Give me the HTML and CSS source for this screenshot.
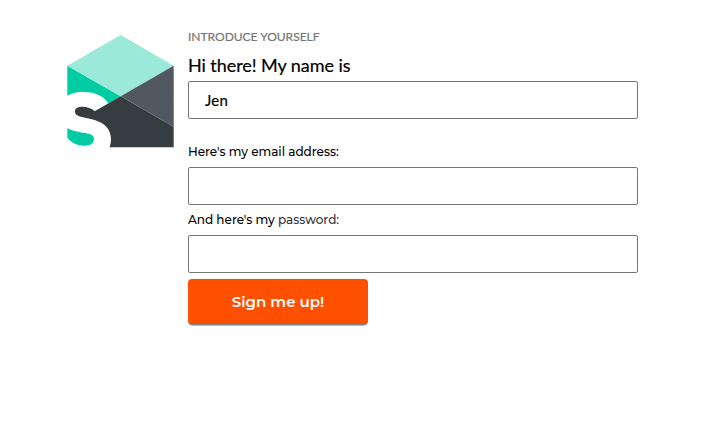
FILE: index.html
```html
<!DOCTYPE html>
<html lang="en">
<head>
<meta charset="utf-8">
<title>Sign up</title>
<link rel="stylesheet" href="styles.css">
</head>
<body>
<main class="signup">
  <svg class="logo" viewBox="21 20 321 339" aria-hidden="true">
    <path fill="#00cca3" d="M22 112 182 204 22 297Z"/>
    <path fill="#373c40" d="M182 204 341 295V357H22V297L40 215 92 225 104 249Z"/>
    <path fill="#9be9d9" d="M182 20 341 112 182 204 22 112Z"/>
    <path fill="#515860" d="M341 112V295L182 204Z"/>
    <path fill="#fff" d="M20 203C40 192 56 191 72 191C108 191 132 205 145 225L104 248C95 240 81 235 67 235C53 235 45 240 45 248C45 258 50 262 62 265C76 269 88 270 104 275C136 285 153 304 153 333C153 343 151 350 148 359H20Z"/>
    <path fill="#00cca3" d="M22 299C39 309 55 311 75 314C94 317 102 321 102 332C102 345 91 352 74 352C52 352 34 343 22 328Z"/>
  </svg>
  <form class="form">
    <p class="eyebrow">INTRODUCE YOURSELF</p>
    <label class="title" for="name">Hi there! My name is</label>
    <input class="field" id="name" type="text" value="Jen">
    <label class="label email" for="email">Here's my email address:</label>
    <input class="field" id="email" type="email">
    <label class="label password" for="password">And here's my <span class="soft">password:</span></label>
    <input class="field" id="password" type="password">
    <div class="submit-base"><button class="submit" type="button">Sign me up!</button></div>
  </form>
</main>
</body>
</html>
```
FILE: styles.css
```css
* { box-sizing: border-box; }
body { margin: 0; background: #fff; color: #000; }
.signup { display: flex; align-items: flex-start; gap: 14px; padding: 29px 0 0 67px; }
.logo { display: block; width: 107px; height: 113px; margin-top: 6px; flex: none; }
.form { display: flex; flex-direction: column; align-items: flex-start; width: 450px; }
.eyebrow { margin: 0; font: 12px/16px Lato, sans-serif; color: #777; -webkit-text-stroke: .2px #777; }
.title { margin-top: 8px; font: 18px/24px Lato, sans-serif; height: 28px; letter-spacing: -.06px; -webkit-text-stroke: .2px #000; }
.field { width: 450px; height: 38px; margin: 0; padding: 1px 16px; border: 1px solid #767676; border-radius: 2px; background: #fff; font: 15px Lato, sans-serif; letter-spacing: .2px; color: #000; outline: none; -webkit-text-stroke: .2px #000; }
.label { font: 500 12px/16px Montserrat, Inter, sans-serif; white-space: nowrap; }
.email { margin: 25px 0 7px; }
.password { margin: 7px 0; }
.soft { color: #333; }
.submit-base { margin-top: 6px; padding-bottom: 2px; border-radius: 4px 4px 5px 5px; background: linear-gradient(to bottom, transparent 30px, #85878b 30px, #85878b 46px, #b5b5b8 46px); }
.submit { display: block; width: 180px; height: 45px; padding: 0; border: 0; border-radius: 4px; background: #ff5000; color: #fff; font: 600 15px Montserrat, Inter, sans-serif; }
```
